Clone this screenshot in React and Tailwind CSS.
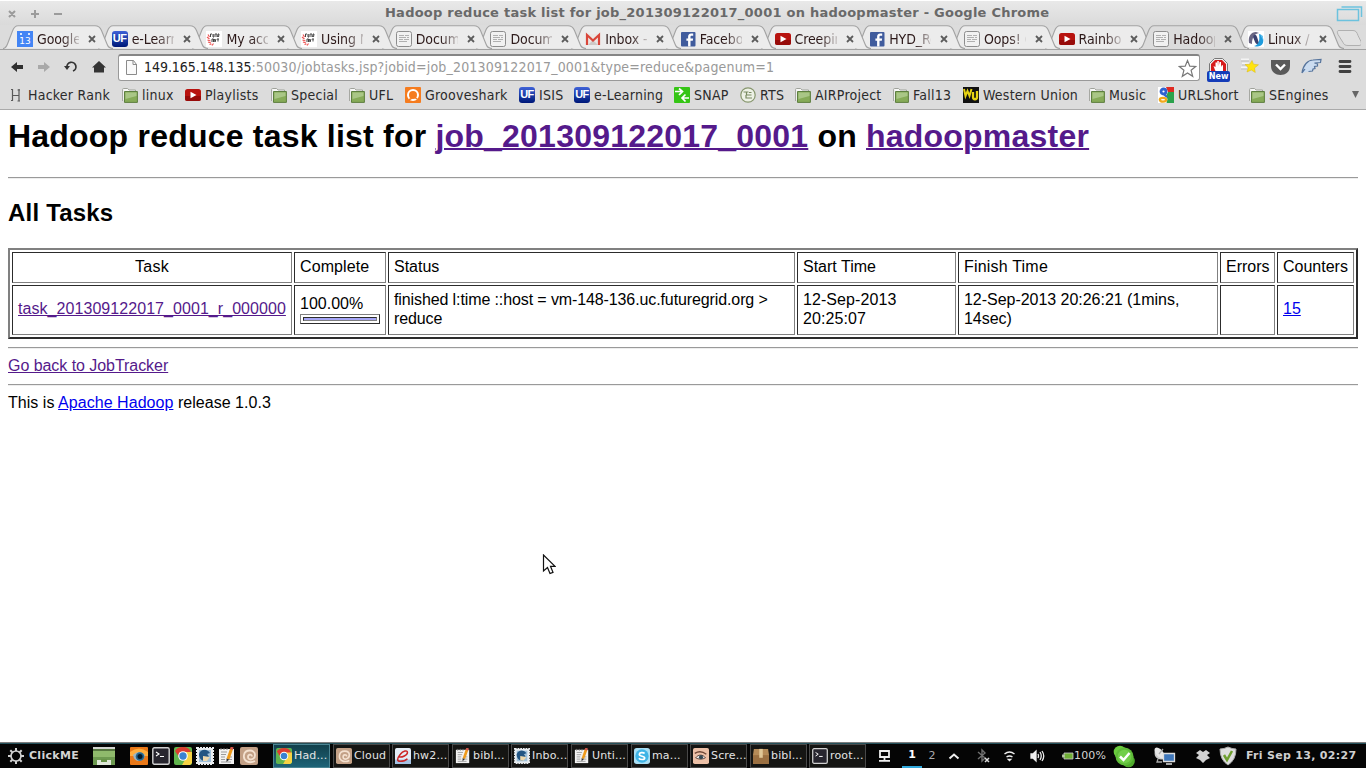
import React from "react";

const DV = "font-['DejaVu_Sans',sans-serif]";
const CD = "font-['DejaVu_Sans_Condensed','DejaVu_Sans',sans-serif] [font-stretch:condensed]";

const Svg = ({ s = 16, vb = "0 0 16 16", className = "", children }) => (
  <svg width={s} height={s} viewBox={vb} className={"shrink-0 " + className} fill="none">{children}</svg>
);

function Uf() {
  return (
    <span className="w-4 h-4 shrink-0 rounded-[3px] bg-linear-to-b from-[#3f62d8] to-[#001678] flex items-center justify-center text-white font-bold text-[11px] leading-none font-['Liberation_Sans',sans-serif] tracking-[-0.5px]">UF</span>
  );
}
function Calendar() {
  return (
    <span className="w-4 h-4 shrink-0 bg-[#4385f5] flex items-end justify-center relative">
      <span className="absolute top-[2px] left-[3px] w-[2px] h-[2px] bg-white/80" />
      <span className="absolute top-[2px] right-[3px] w-[2px] h-[2px] bg-white/80" />
      <span className={"text-white text-[9px] leading-[11px] " + DV}>13</span>
    </span>
  );
}
const Future = () => (
  <Svg>
    <path d="M0 0h16v16H0z" fill="#fff" />
    <path d="M4.500 6V3H6M7 3v3h1V3M9 3h2M10 3v3M11.500 6l.5-3h1l-.5 3M6 11V8h1.500v3M8.500 8l.5 3 1-3M11 8h2M12 8v2.500" stroke="#444" strokeWidth="1" />
    <path d="M2 3.500l1.500 2.500M1 6l2.500 2M1.500 9l3 1M2 11l3 1M3.500 13.500l2-.5M6 14.500l1.500-2" stroke="#e55" strokeWidth="1.200" />
  </Svg>
);
const Doc = () => (
  <Svg>
    <rect x=".5" y=".5" width="15" height="15" rx="2" fill="#f1f1f1" stroke="#8d8d8d" />
    <path d="M3 4.500h5M9 4.500h4M3 6.500h7M11 6.500h2M3 8.500h4M8 8.500h5M3 10.500h8" stroke="#b0b0b0" />
  </Svg>
);
const Gmail = () => (
  <Svg>
    <path d="M1 3h14v11H1z" fill="#ebe7e5" /><path d="M3 14l5-5 5 5z" fill="#cfc9c6" />
    <path d="M2 14V4l6 5.500L14 4v10" stroke="#d9463a" strokeWidth="2.200" />
  </Svg>
);
const Facebook = () => (
  <Svg>
    <rect x="1" y="1" width="14.500" height="14.500" rx="1" fill="#405c9d" />
    <path d="M10.500 15.500V9.700h2.300l.3-2.200h-2.600V6c0-.8.3-1.200 1.200-1.200h1.500V2.600h-2C9 2.600 8.100 4 8.100 5.700v1.800H6.400v2.200h1.700v5.800z" fill="#fff" />
  </Svg>
);
const Youtube = () => (
  <Svg>
    <rect x="0" y="2" width="16" height="12" rx="2.500" fill="#b8130f" /><path d="M0 9h16v2.500a2.500 2.500 0 01-2.500 2.500h-11A2.500 2.500 0 010 11.500z" fill="#970b0a" />
    <path d="M5.500 4.800l6 3.200-6 3.200z" fill="#fff" />
  </Svg>
);
const LinuxAc = () => (
  <Svg>
    <path d="M0 0h16v16H0z" fill="#fff" />
    <path d="M1 12C0 5 3 1 8 1l3 1c-5 1-7 5-7 11z" fill="#6a6784" />
    <path d="M5 6c1-3 3-3 4 0l2 6c1 2-3 2-4-1z" fill="#3b4270" />
    <path d="M11 3c4 1 5 5 4 9-2 4-6 4-9 3 5-1 6-6 5-12z" fill="#1f9bdc" />
    <path d="M12 3l3 2v4z" fill="#68c3ee" />
  </Svg>
);
const Folder = () => (
  <Svg>
    <path d="M.6 14V2.500q0-1 1-1h4l1.500 1.500h6.400v3" fill="#f8f8f8" stroke="#9fa29b" />
    <path d="M2.500 4.500h12.900v10.900H2.500z" fill="#86ab58" stroke="#5d7f3f" />
    <path d="M3.500 5.500h11v3.500l-11 3z" fill="#a9c686" />
  </Svg>
);
const HackerRank = () => (
  <Svg><path d="M4.500 2v12M11 2v12.500M4.500 8.500H11M3 2.500h1.500M3 13.500h1.500M9.500 3H12M9.500 14H12" stroke="#5a5a5a" strokeWidth="1.200" /></Svg>
);
const Groove = () => (
  <Svg>
    <rect width="16" height="16" rx="1" fill="#f57c1f" /><circle cx="8" cy="8" r="5" stroke="#fff" strokeWidth="2" />
    <path d="M4 12.500c1.500 0 2.500-1 3-2.500 1-2 2.500-1 3 0 .5 1 1 2 2.500 2" stroke="#f57c1f" strokeWidth="1.500" />
  </Svg>
);
const Snap = () => (
  <Svg>
    <rect width="16" height="16" rx="1" fill="#35c515" />
    <path d="M1 4.500h6M5 1.500l3.500 3L5 8M15 11H9M11.500 7.500L8 11l3.500 3.500" stroke="#fff" strokeWidth="1.700" />
  </Svg>
);
const Rts = () => (
  <Svg>
    <circle cx="8" cy="8" r="7.200" fill="#edf1e6" stroke="#87966e" strokeWidth="1.200" />
    <path d="M3.500 5h5M6.500 5v3h5M6 8v3h6M9 5.500h2.500" stroke="#788a60" strokeWidth="1.200" />
  </Svg>
);
const Wu = () => (
  <Svg>
    <path d="M0 0h16v16H0z" fill="#111" />
    <path d="M1 2l1.500 7L4.500 4l2 5L8.500 2" stroke="#e7d314" strokeWidth="2" /><path d="M10 5v5c0 3 4 3 4 0V4" stroke="#e7d314" strokeWidth="2.300" />
  </Svg>
);
const GoogleG = () => (
  <Svg>
    <path d="M0 0h16v16H0z" fill="#fff" /><path d="M8 0h8v5h-6z" fill="#e02a22" /><path d="M10 5h6v11H8.500l1-4L8 9z" fill="#2ba24c" />
    <circle cx="5.500" cy="4.500" r="2.500" stroke="#2f62d0" strokeWidth="2.800" /><path d="M7 7.500c-1 1 2 1.500 1.500 3" stroke="#2f62d0" strokeWidth="2" />
    <ellipse cx="5" cy="12.800" rx="3.200" ry="1.900" stroke="#f0a81d" strokeWidth="2.300" />
  </Svg>
);

const tabs = [
  ["Google", Calendar], ["e-Learn", Uf], ["My acc", Future], ["Using N", Future], ["Docum", Doc],
  ["Docum", Doc], ["Inbox -", Gmail], ["Facebo", Facebook], ["Creepin", Youtube], ["HYD_Re", Facebook],
  ["Oops! (", Doc], ["Rainbo", Youtube], ["Hadoop", Doc], ["Linux /", LinuxAc],
];

function Tab({ label, Icon, index }) {
  const active = index === 12;
  return (
    <div className="relative w-[94.7px] h-6 shrink-0" style={{ zIndex: active ? 30 : 20 - index }}>
      <svg className="absolute left-0 top-0" width="112" height="25" viewBox="0 0 112 25">
        <path
          d="M0 23.500C2.500 23.500 3.500 21.500 4.500 19L9.500 6C11 2 12.500.8 15 .8H92C95 .8 97 2 98.500 5.500L104 19C105 22 106.500 23.500 110 23.500"
          fill={active ? "#dcdcdc" : "#ececec"} stroke="#a3a3a3" strokeWidth="1.100"
        />
        {active && <path d="M2 24h106" stroke="#dcdcdc" strokeWidth="2" />}
      </svg>
      <div className="relative flex items-center h-6 pl-[14px] pt-[3px]">
        <Icon />
        <span className={"ml-1 w-[42px] shrink-0 whitespace-nowrap text-[14px] leading-5 tracking-[-0.1px] text-[#2d1a1a] [mask-image:linear-gradient(to_right,#000_60%,rgba(0,0,0,0.2))] " + CD}>{label}</span>
        <svg width="8" height="8" className="ml-[9px] shrink-0"><path d="M1 1l6 6M7 1L1 7" stroke="#5c5c5c" strokeWidth="1.800" /></svg>
      </div>
    </div>
  );
}

const bookmarks = [
  ["Hacker Rank", HackerRank, "w-[114px]"], ["linux", Folder, "w-[63px]"], ["Playlists", Youtube, "w-[86px]"],
  ["Special", Folder, "w-[78px]"], ["UFL", Folder, "w-[56px]"], ["Grooveshark", Groove, "w-[114px]"],
  ["ISIS", Uf, "w-[55px]"], ["e-Learning", Uf, "w-[100px]"], ["SNAP", Snap, "w-[66px]"], ["RTS", Rts, "w-[55px]"],
  ["AIRProject", Folder, "w-[98px]"], ["Fall13", Folder, "w-[70px]"], ["Western Union", Wu, "w-[126px]"],
  ["Music", Folder, "w-[69px]"], ["URLShort", GoogleG, "w-[91px]"], ["SEngines", Folder, "w-[102px]"],
];

function Browser() {
  return (
    <header className="h-[110px] bg-[#dcdcdc] border-b border-[#aaa] flex flex-col shrink-0">
      <div className="h-[25px] shrink-0 bg-linear-to-b from-[#e9e9e9] to-[#dadada] border-t border-white flex items-center">
        <svg width="70" height="24" stroke="#9b9b9b" strokeWidth="2" className="shrink-0">
          <path d="M9 10l6 6M15 10l-6 6M31 13h8M35 9v8M54 13h8" />
        </svg>
        <h2 className={"ml-[315px] whitespace-nowrap text-[13px] leading-5 tracking-[0.245px] font-bold text-[#696969] " + DV}>Hadoop reduce task list for job_201309122017_0001 on hadoopmaster - Google Chrome</h2>
        <svg width="28" height="20" className="ml-auto mr-[2px]" fill="none" stroke="#6cc2de" strokeWidth="1.500">
          <path d="M1.500 6.500h21v11h-21zM5.500 4h20v10" />
        </svg>
      </div>
      <div className="h-[25px] shrink-0 flex pl-[3px] overflow-hidden border-b border-[#a2a2a2]">
        {tabs.map(([label, Icon], i) => <Tab key={i} label={label} Icon={Icon} index={i} />)}
        <svg width="32" height="24" className="shrink-0"><path d="M10 5.500h14c3 0 4 2 5 5l3 6c1 3 0 4-2 4H19c-3 0-4-1-5-3L9 9.500C8 7 8 5.500 10 5.500z" fill="#e2e2e2" stroke="#b0b0b0" /></svg>
      </div>
      <div className="h-[34px] shrink-0 flex items-center">
        <svg width="118" height="34" className="shrink-0">
          <path d="M11 17l6-5v3h6v4h-6v3z" fill="#303030" /><path d="M50 17l-6-5v3h-6v4h6v3z" fill="#a9a9a9" />
          <path d="M67 17.500a4.500 4.500 0 1 1 6 3.500" fill="none" stroke="#343434" strokeWidth="1.700" /><path d="M64 16h6l-3 4z" fill="#343434" />
          <path d="M92 17.500l7-6.500 7 6.500h-2v5h-10v-5z" fill="#343434" />
        </svg>
        <div className="w-[1082px] h-[27px] mt-[1px] bg-white border border-[#999] border-t-2 border-t-[#858585] rounded-[3px] flex items-center pl-[6px] pr-1 shrink-0">
          <svg width="14" height="16" className="shrink-0"><path d="M1.500.5h7l3 4v10h-10z" fill="#fafafa" stroke="#8b8b8b" /><path d="M8 .5v4h4" fill="none" stroke="#8b8b8b" /></svg>
          <span className={"ml-[5px] -mt-[2px] text-[14px] leading-5 whitespace-nowrap tracking-[0.175px] text-[#999] " + CD}><span className="text-[#222] tracking-[-0.05px]">149.165.148.135</span>:50030/jobtasks.jsp?jobid=job_201309122017_0001&amp;type=reduce&amp;pagenum=1</span>
          <svg width="19" height="19" viewBox="0 0 19 19" className="ml-auto shrink-0 mr-[-2px]"><path d="M9.500 1.500l2.300 5.700 5.900.3-4.600 3.800 1.600 6-5.200-3.400-5.200 3.400 1.600-6L1.300 7.500l5.900-.3z" fill="#fff" stroke="#777" strokeWidth="1.200" /></svg>
        </div>
        <div className="relative ml-[7px] mt-[5px] w-[23px] h-[24px] shrink-0">
          <svg width="23" height="24"><path d="M7.500 .5h8l5 5v8l-5 5h-8l-5-5v-8z" fill="#eee" stroke="#777" /><path d="M8 2h7l4 4v8h-15V6z" fill="#d61b1b" /><path d="M8 12l-1.500-4 2 1V4.500H10V8l.3-5h1.500v5l.7-4H14v5l1-2 1 .5V14H9z" fill="#fff" /></svg>
          <span className={"absolute left-0 bottom-0 h-[11px] w-[23px] rounded-[2px] bg-[#153cb8] text-white font-bold text-[9px] leading-[10px] text-center " + CD}>New</span>
        </div>
        <svg width="145" height="30" className="shrink-0">
          <path d="M11 7.500h8M12 11.500h7M11 15.500h6" stroke="#f4f4f4" strokeWidth="2" /><path d="M11 9h8M12 13h6M11 17h6" stroke="#bdbdbd" />
          <path d="M22 8.500l1.500 3.700 5 .6-4 3.200.8 4.500-4-2.500-4.300 2 1.200-4.500-3.200-3 4.800-.3z" fill="#ffe40f" stroke="#d9b714" strokeWidth=".5" />
          <path d="M41 8h19v6c0 12-19 12-19 0z" fill="#5a5a5a" /><path d="M46 12.500l4.500 4.500 4.500-4.500" stroke="#fff" strokeWidth="2.400" fill="none" />
          <path d="M72 21c1-8 6-13 11-13l8-.5-.5 3-6 .5 3 1v2l-3 .5.5 2-2 .5-.5 2-4 .5M72 21l3-4" stroke="#56749c" strokeWidth="1.200" fill="#cbdcf0" />
          <path d="M110 9.500h10M110 14.500h10M110 19.500h10" stroke="#404040" strokeWidth="2.800" strokeLinecap="round" />
        </svg>
      </div>
      <nav className="h-[21px] flex items-center pl-2 overflow-hidden">
        {bookmarks.map(([label, Icon, w]) => (
          <a key={label} className={"flex items-center gap-1 shrink-0 " + w}>
            <Icon /><span className={"text-[14px] leading-5 tracking-[0.24px] whitespace-nowrap text-[#2b2b2b] " + CD}>{label}</span>
          </a>
        ))}
        <svg width="10" height="8"><path d="M1 0h7L4.500 7z" fill="#666" /></svg>
      </nav>
    </header>
  );
}

const cell = "border border-t-[#2c2c2c] border-l-[#2c2c2c] border-b-[#808080] border-r-[#808080] px-[5px] pt-0 pb-[2px] text-left align-middle font-normal";
const visited = "text-[#551a8b] underline";
const fresh = "text-[#0000ee] underline";
const Rule = ({ className = "" }) => <hr className={"border-0 border-t border-t-[#9a9a9a] h-[2px] bg-[#eee] " + className} />;

function Page() {
  return (
    <main className="h-[632px] bg-white px-2 text-black text-[16px] leading-[19px] font-['Liberation_Sans',Arial,sans-serif] shrink-0 overflow-hidden">
      <h1 className="text-[32px] leading-[37px] font-bold mt-[8px] whitespace-nowrap tracking-[0.215px]">
        Hadoop reduce task list for <a className={visited + " decoration-2"}>job_201309122017_0001</a> on <a className={visited + " decoration-2"}>hadoopmaster</a>
      </h1>
      <Rule className="mt-[22px]" />
      <h2 className="text-[24px] leading-7 font-bold mt-5 tracking-[0.2px]">All Tasks</h2>
      <table className="mt-[21px] w-[1350px] h-[91px] table-fixed border-separate border-spacing-[2px] border-2 border-t-[#808080] border-l-[#808080] border-b-[#2c2c2c] border-r-[#2c2c2c]">
        <colgroup>
          <col className="w-[280px]" /><col className="w-[92px]" /><col className="w-[407px]" /><col className="w-[159px]" />
          <col className="w-[260px]" /><col className="w-[55px]" /><col className="w-[77px]" />
        </colgroup>
        <tbody>
          <tr className="h-[31px]">
            <td className={cell}><div className="text-center tracking-[0.3px]">Task</div></td>
            <td className={cell + " tracking-[0.1px]"}>Complete</td><td className={cell}>Status</td><td className={cell}>Start Time</td>
            <td className={cell + " tracking-[0.2px]"}>Finish Time</td><td className={cell}>Errors</td><td className={cell}>Counters</td>
          </tr>
          <tr className="h-[50px]">
            <td className={cell + " tracking-[0.06px]"}><div className="-mt-[2px]"><a className={visited}>task_201309122017_0001_r_000000</a></div></td>
            <td className={cell}>
              100.00%
              <div className="w-[80px] h-[10px] mt-[1px] border border-t-[#808080] border-l-[#808080] border-b-[#2c2c2c] border-r-[#2c2c2c] p-[2px]">
                <div className="h-1 bg-[#a5a5f5] border border-t-[#2c2c2c] border-l-[#2c2c2c] border-b-[#808080] border-r-[#808080]" />
              </div>
            </td>
            <td className={cell + " tracking-[-0.11px]"}>finished l:time ::host = vm-148-136.uc.futuregrid.org &gt;<br />reduce</td>
            <td className={cell + " tracking-[0.08px]"}>12-Sep-2013<br />20:25:07</td>
            <td className={cell + " tracking-[-0.03px]"}>12-Sep-2013 20:26:21 (1mins,<br />14sec)</td>
            <td className={cell} />
            <td className={cell}><div className="-mt-[2px]"><a className={fresh}>15</a></div></td>
          </tr>
        </tbody>
      </table>
      <Rule className="mt-2" />
      <p className="mt-[7px] tracking-[-0.05px]"><a className={visited}>Go back to JobTracker</a></p>
      <Rule className="mt-[9px]" />
      <p className="mt-[7px] tracking-[0.04px]">This is <a className={fresh}>Apache Hadoop</a> release 1.0.3</p>
    </main>
  );
}

const Firefoxish = () => (
  <Svg s={18} vb="0 0 18 18"><rect width="18" height="18" rx="1" fill="#e97818" /><path d="M0 5Q9-2 18 5v4H0z" fill="#ffad3d" /><path d="M3 8q6-6 12 0-1 6-6 6T3 8z" fill="#9db5c2" /><circle cx="10" cy="9.500" r="4.300" fill="#246690" /><circle cx="10" cy="9.500" r="2.500" fill="#061825" /></Svg>
);
const Term = ({ s = 18 }) => (
  <Svg s={s} vb="0 0 18 18"><rect x=".8" y=".8" width="16.400" height="16.400" rx="1.500" fill="#27252e" stroke="#d1d1d1" strokeWidth="1.400" /><path d="M4 5l3 2L4 9M8 9.500h4" stroke="#fff" strokeWidth="1.100" /></Svg>
);
const Chrome = ({ s = 18 }) => (
  <Svg s={s} vb="0 0 18 18"><rect width="18" height="18" rx="2" fill="#60b54d" /><path d="M1 4Q3 0 9 0t8 5v1H9L5 10z" fill="#dc3d31" /><path d="M9 5h9v11l-2 2H8l4-7z" fill="#f7d344" /><circle cx="9" cy="9" r="4.800" fill="#fff" /><circle cx="9" cy="9" r="3.700" fill="#3b82d1" /></Svg>
);
const Bird = ({ s = 18 }) => (
  <Svg s={s} vb="0 0 18 18"><rect x="1" y="1" width="16" height="16" fill="#e9edf0" stroke="#e9edf0" strokeWidth="2" strokeDasharray="2 1" /><rect x="3" y="3" width="12" height="12" fill="#9fc0da" /><path d="M3 7c2-6 9-5 11-1l-3 1c3 2 2 6-2 7-4 0-6-3-6-7z" fill="#225583" /><path d="M7 9l7 1-3 4H7z" fill="#edd8ac" /></Svg>
);
const Notes = ({ s = 18 }) => (
  <Svg s={s} vb="0 0 18 18"><path d="M1 2h15v15H1z" fill="#f2f2f2" /><path d="M3 5h6M3 7.500h5M3 10h4M3 12.500h4M11 12.500h3M12 10h2M3 15h10" stroke="#9b9b9b" /><path d="M3 1v2M6 1v2M9 1v2" stroke="#777" /><path d="M13.500 2L10 12" stroke="#ef9b1c" strokeWidth="3" /><path d="M14.200 0l-.8 2.500" stroke="#d3594e" strokeWidth="3" /><path d="M8.500 11.500V15l2.800-2.500" fill="#333" /></Svg>
);
const Shell = ({ s = 18 }) => (
  <Svg s={s} vb="0 0 18 18"><rect width="18" height="18" rx="2" fill="#c3a086" /><path d="M15 14c-6 3-12 0-11-6 1-6 11-6 11 0 0 5-7 6-7 2 0-3 4-3 4-.5" stroke="#f4e1d0" strokeWidth="1.800" /></Svg>
);
const Pdf = ({ s = 18 }) => (
  <Svg s={s} vb="0 0 18 18"><rect width="18" height="18" rx="2" fill="#e4edf6" /><path d="M0 13h18v5H0z" fill="#a3c1e2" /><path d="M4 10c4 1 10-2 10-5 0-3-5-2-8 2-4 5-4 8 0 8 3 0 6-1 8-3" stroke="#cc2626" strokeWidth="1.700" /></Svg>
);
const Skype = ({ s = 18 }) => (
  <Svg s={s} vb="0 0 18 18"><rect width="18" height="18" rx="3" fill="#a9def3" /><circle cx="9" cy="9" r="7.500" fill="#3fb4e6" /><path d="M12 6C10 4.500 6 5 6 7c0 3 6 1.500 6 4.200 0 2.300-5 2.300-6.500.3" stroke="#fff" strokeWidth="1.900" /></Svg>
);
const Eye = ({ s = 18 }) => (
  <Svg s={s} vb="0 0 18 18"><rect width="18" height="18" rx="2" fill="#ecc0a7" /><path d="M2 6c5-3 9-2 13 1" stroke="#6d4535" strokeWidth="1.500" /><path d="M3 11c3-4 8-4 11 0-3 2-8 2-11 0z" fill="#eee" stroke="#513a32" /><circle cx="9" cy="10.300" r="2.300" fill="#364853" /></Svg>
);
const Box = ({ s = 18 }) => (
  <Svg s={s} vb="0 0 18 18"><path d="M1 1h16l1 7v10H0V8z" fill="#b58b58" /><path d="M0 8h18v10H0z" fill="#9b7042" /><path d="M7 1h4v10H7z" fill="#e0c797" /></Svg>
);

const tasks = [
  ["Had...", Chrome, "ml-0"], ["Cloud", Shell, "ml-[3px]"], ["hw2...", Pdf, "ml-[2px]"], ["bibl...", Notes, "ml-[3px]"], ["Inbo...", Bird, "ml-[2px]"],
  ["Unti...", Notes, "ml-[3px]"], ["ma...", Skype, "ml-[3px]"], ["Scre...", Eye, "ml-[2px]"], ["bibl...", Box, "ml-[3px]"], ["root...", Term, "ml-[2px]"],
];

function Taskbar() {
  return (
    <footer className={"h-[26px] shrink-0 bg-[#050505] border-t border-[#7c7c7c] flex items-center text-white overflow-hidden " + DV}>
      <div className="w-[1366px] h-[25px] border-t border-[#24505a] flex items-center shrink-0">
        <Svg s={18} vb="0 0 18 18" className="ml-[7px]">
          <circle cx="9" cy="9" r="5" stroke="#d0d0d0" strokeWidth="1.700" />
          <path d="M9 1v3M9 14v3M1 9h3M14 9h3M3.300 3.300l2 2M12.700 12.700l2 2M3.300 14.700l2-2M12.700 5.300l2-2" stroke="#d0d0d0" strokeWidth="2" />
        </Svg>
        <span className="ml-1 w-[64px] text-[11px] font-bold tracking-[0.3px] text-[#d4d4d4]">ClickME</span>
        <svg width="22" height="18" className="shrink-0"><path d="M0 0h22v18H0z" fill="#8fba6c" /><path d="M0 0h22v2H0z" fill="#d2d5d0" /><path d="M0 2h22v2H0z" fill="#55763f" /><path d="M0 10h22v8H0z" fill="#6d9a50" /><path d="M4 13h14v5H4z" fill="#dfe8d8" /><path d="M8 12h6v3H8z" fill="#679347" /></svg>
        <div className="flex gap-1 ml-[15px] w-[143px] shrink-0"><Firefoxish /><Term /><Chrome /><Bird /><Notes /><Shell /></div>
        {tasks.map(([label, Icon, m], i) => (
          <div key={i} className={"w-[57px] h-[24px] shrink-0 border flex items-center pl-[2px] gap-[2px] overflow-hidden " + m + (i === 0 ? " bg-linear-to-b from-[#12404c] to-[#1d6377] border-[#4b8593]" : " bg-[#151513] border-[#484848]")}>
            <Icon s={16} /><span className="text-[11px] leading-4 tracking-[0.15px] text-[#e4e4e4] whitespace-nowrap">{label}</span>
          </div>
        ))}
        <svg width="14" height="16" className="ml-[12px] shrink-0" fill="none" stroke="#eee" strokeWidth="1.800"><path d="M2 3h9v6H2zM6.500 9v3M1 12.800h11" /></svg>
        <span className="ml-[10px] w-5 h-6 shrink-0 text-center text-[11px] leading-[22px] font-bold border-b-2 border-[#31a9dc]">1</span>
        <span className="w-[20px] shrink-0 text-center text-[11px] text-[#aaa]">2</span>
        <svg width="12" height="10" className="ml-[6px] shrink-0"><path d="M1.500 7.500L6 3.500l4.500 4" fill="none" stroke="#eee" strokeWidth="2" /></svg>
        <svg width="14" height="16" className="ml-[17px] shrink-0" fill="none"><path d="M1 4l7 6-3 3V2l3 3-7 6" stroke="#707070" strokeWidth="1.400" /><path d="M8 10l4 4M12 10l-4 4" stroke="#ddd" strokeWidth="1.500" /></svg>
        <svg width="14" height="14" className="ml-[12px] shrink-0" fill="none" stroke="#eee" strokeWidth="1.500"><path d="M1.500 5q5-4 10 0M3.500 8q3-2 6 0" /><path d="M5.500 10.500h2l-1 1z" fill="#eee" /></svg>
        <svg width="16" height="14" className="ml-[13px] shrink-0" fill="none" stroke="#eee" strokeWidth="1.300"><path d="M1 5h2l3-3v10L3 9H1z" fill="#eee" /><path d="M8 5q1 2 0 4M10 3q2.500 4 0 8M12 2q3.500 5 0 10" /></svg>
        <svg width="12" height="8" className="ml-[16px] shrink-0"><path d="M2 1h9v6H2zM0 3h2v2H0z" fill="#6fae36" stroke="#ccc" strokeWidth=".8" /></svg>
        <span className="ml-0 w-[39px] shrink-0 text-[11px] tracking-[0.15px] text-[#d4d4d4]">100%</span>
        <svg width="23" height="23" className="shrink-0"><circle cx="7" cy="7" r="6.300" fill="#6acc3e" /><circle cx="15.500" cy="16" r="6.300" fill="#4eaa2b" /><circle cx="11.500" cy="11.500" r="9" fill="#5fbc39" /><circle cx="11.500" cy="11.500" r="6.800" fill="#71cf49" /><path d="M7 11.500l3.500 3.500 6-7" fill="none" stroke="#fff" strokeWidth="2.500" /></svg>
        <svg width="24" height="20" className="ml-[17px] shrink-0"><path d="M2 4c-2 7 3 11 9 9z" fill="#ccc" /><ellipse cx="6.500" cy="7" rx="3.500" ry="6.500" transform="rotate(-40 6.500 7)" fill="#e6e6e6" /><path d="M6 8l4-5M5 13l-1 3h5" stroke="#aaa" strokeWidth="1.300" fill="none" /><path d="M10.500 7.500h11v8h-11zM13 18h6" fill="#3f77ba" stroke="#ddd" strokeWidth="1.300" /></svg>
        <svg width="14" height="14" className="ml-[19px] shrink-0" fill="#d2d2d2"><path d="M4 1l3 2 3-2 4 3-3 2 3 3-4 2-3 3-3-3-4-2 3-3-3-2z" /></svg>
        <svg width="18" height="20" className="ml-[9px] shrink-0"><path d="M9 1q4 2 8 2 0 11-8 16Q1 14 1 3q4 0 8-2z" fill="#dedede" stroke="#aaa" /><path d="M5 9l3 5 5-9" stroke="#6f9f30" strokeWidth="2.500" fill="none" /></svg>
        <span className="ml-[9px] whitespace-nowrap text-[11px] tracking-[0.3px] font-bold text-[#d0d0d0]">Fri Sep 13, 02:27</span>
      </div>
    </footer>
  );
}

export default function App() {
  return (
    <div className="w-[1366px] h-[768px] overflow-hidden flex flex-col bg-white relative">
      <Browser />
      <Page />
      <Taskbar />
      <svg width="14" height="22" className="absolute left-[542px] top-[554px]"><path d="M1.500 1v16l4-3.500 2.500 6 3-1.200-2.500-6h4.500z" fill="#fff" stroke="#111" strokeWidth="1.200" /></svg>
    </div>
  );
}
